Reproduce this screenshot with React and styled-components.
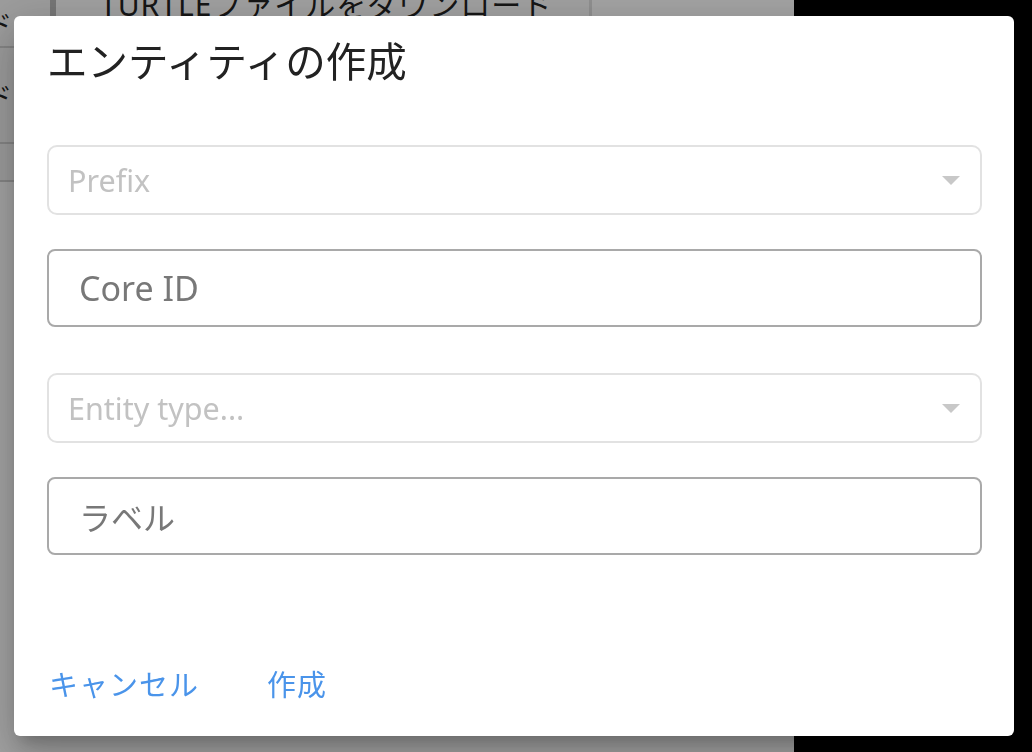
import React from 'react'
import styled, { createGlobalStyle } from 'styled-components'

const GlobalStyle = createGlobalStyle`
  html, body {
    margin: 0;
    padding: 0;
    height: 100%;
    overflow: hidden;
    font-family: "Noto Sans", "Noto Sans CJK JP", sans-serif;
  }
`

// page behind the dialog
const Page = styled.div`
  display: flex;
  height: 100vh;
`

const Main = styled.div`
  width: 794px;
  background: #fff;
  overflow: hidden;
  display: flex;
  align-items: flex-start;
`

const SideColumn = styled.div`
  width: 50px;
  display: flex;
  flex-direction: column;
  border-right: 6px solid #b8b8b8;
`

const SideButton = styled.div`
  height: ${p => p.h}px;
  border-bottom: 2px solid #d0d0d0;
  background: #f4f4f4;
  overflow: hidden;
  display: flex;
  justify-content: flex-end;
  align-items: center;
  padding-right: 38px;
  font-size: 26px;
  color: #222;
  white-space: nowrap;
`

const TopButton = styled.div`
  width: 536px;
  height: 50px;
  margin-top: -30px;
  background: #fbfbfb;
  border-right: 3px solid #e0e0e0;
  display: flex;
  align-items: flex-end;
  padding-left: 44px;
  font-size: 30px;
  line-height: 1;
  letter-spacing: 1px;
  color: #222;
  white-space: nowrap;
  padding-bottom: 0;
  box-sizing: border-box;
`

const Dark = styled.div`
  flex: 1;
  background: #000;
`

const Overlay = styled.div`
  position: fixed;
  inset: 0;
  background: rgba(0, 0, 0, 0.36);
`

const Dialog = styled.div`
  position: fixed;
  left: 14px;
  top: 16px;
  width: 1000px;
  height: 720px;
  box-sizing: border-box;
  background: #fff;
  border-radius: 6px;
  box-shadow: 0 11px 15px -7px rgba(0, 0, 0, 0.2),
    0 24px 38px 3px rgba(0, 0, 0, 0.14),
    0 9px 46px 8px rgba(0, 0, 0, 0.12);
  display: flex;
  flex-direction: column;
  padding: 0 32px 0 33px;
`

const Title = styled.h2`
  margin: 0;
  padding: 20px 0 0 0;
  font-size: 40.5px;
  font-weight: 400;
  line-height: 48px;
  color: #222;
  font-family: "Noto Sans CJK JP", sans-serif;
`

const Form = styled.div`
  display: flex;
  flex-direction: column;
  margin-top: 61px;
`

const Select = styled.div`
  height: 70px;
  box-sizing: border-box;
  border: 2px solid #e2e2e2;
  border-radius: 10px;
  display: flex;
  align-items: center;
  justify-content: space-between;
  padding: 0 20px 0 19px;
  margin-top: ${p => p.mt || 0}px;
  font-size: 30.5px;
  color: #c2c2c2;
`

const Arrow = styled.span`
  width: 0;
  height: 0;
  border-left: 9px solid transparent;
  border-right: 9px solid transparent;
  border-top: 9px solid #c8c8c8;
`

const Input = styled.div`
  height: 78px;
  box-sizing: border-box;
  border: 2px solid #a9a9a9;
  border-radius: 8px;
  display: flex;
  align-items: center;
  padding: 0 30px;
  margin-top: ${p => p.mt || 0}px;
  font-size: ${p => p.fs || 34}px;
  color: #787878;
`

const Actions = styled.div`
  margin-top: auto;
  margin-bottom: 32px;
  display: flex;
  gap: 68px;
  padding-left: 2px;
`

const TextButton = styled.button`
  border: none;
  background: none;
  padding: 0;
  font-family: "Noto Sans CJK JP", sans-serif;
  font-size: 29px;
  letter-spacing: 1px;
  color: #4a94ea;
  cursor: pointer;
`

export default function App() {
  return (
    <>
      <GlobalStyle />
      <Page>
        <Main>
          <SideColumn>
            <SideButton h={46}>ダウンロード</SideButton>
            <SideButton h={94}>ダウンロード</SideButton>
            <SideButton h={36}></SideButton>
          </SideColumn>
          <TopButton>TURTLEファイルをダウンロード</TopButton>
        </Main>
        <Dark />
      </Page>
      <Overlay />
      <Dialog>
        <Title>エンティティの作成</Title>
        <Form>
          <Select>
            <span>Prefix</span>
            <Arrow />
          </Select>
          <Input mt={34}>Core ID</Input>
          <Select mt={46}>
            <span>Entity type...</span>
            <Arrow />
          </Select>
          <Input mt={34} fs={32}>ラベル</Input>
        </Form>
        <Actions>
          <TextButton>キャンセル</TextButton>
          <TextButton>作成</TextButton>
        </Actions>
      </Dialog>
    </>
  )
}
